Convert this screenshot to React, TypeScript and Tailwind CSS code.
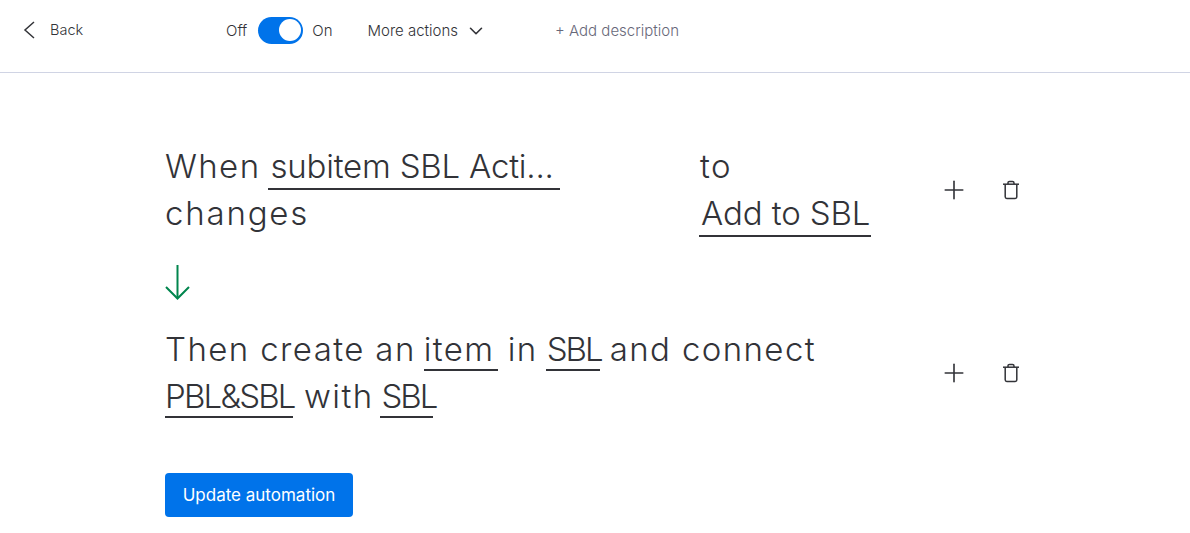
import { ChevronDown, Plus } from "lucide-react";

function Trash() {
  return (
    <svg width="18" height="20" viewBox="0 0 18 20" fill="none" stroke="#323338" strokeWidth="1.5" strokeLinejoin="round">
      <path d="M1 4.2h16" />
      <path d="M3.2 4.2v12.6c0 1 .6 1.7 1.6 1.7h8.4c1 0 1.6-.7 1.6-1.7V4.2" />
      <path d="M6 4V3c0-1 .6-1.6 1.500-1.600h3C11.400 1.400 12 2 12 3v1" />
    </svg>
  );
}

function RowActions() {
  return (
    <div className="flex items-center gap-[33px]">
      <Plus size={30} strokeWidth={1.3} color="#323338" />
      <Trash />
    </div>
  );
}

function Field({ children, className = "" }: { children: React.ReactNode; className?: string }) {
  return (
    <span className={`inline-block h-[45px] whitespace-nowrap border-b-2 border-[#323338] ${className}`}>
      {children}
    </span>
  );
}

export default function App() {
  return (
    <div className="h-[533px] w-[1190px] overflow-hidden bg-white font-['Inter',sans-serif] text-[#323338]">
      <header className="flex h-[73px] items-center border-b border-[#d0d4e4] pb-[12px] text-[15px] font-light">
        <div className="flex w-[226px] items-center pl-[23px]">
          <svg width="13" height="18" viewBox="0 0 13 18" fill="none" stroke="#323338" strokeWidth="1.500">
            <path d="M11 1 L2 9 L11 17" />
          </svg>
          <span className="ml-[14px] text-[14.500px]">Back</span>
        </div>
        <span className="mt-[2px]">Off</span>
        <span className="ml-[11px] flex h-[27px] w-[45px] items-center justify-end rounded-full bg-[#0073ea] pr-[2px]">
          <span className="h-[22px] w-[22px] rounded-full bg-white" />
        </span>
        <span className="ml-[9px] mt-[2px]">On</span>
        <span className="ml-[35px] mt-[2px]">More actions</span>
        <ChevronDown size={22} strokeWidth={1.75} className="ml-[7px] mt-[2px]" />
        <span className="ml-[68px] mt-[2px] text-[#676879]">+ Add description</span>
      </header>

      <main className="pl-[165px] text-[33px] font-light leading-[47px] tracking-[1.4px]">
        <div className="mt-[70px] flex w-[855px] items-center justify-between">
          <div className="grid grid-cols-[534px_auto]">
            <div className="flex">
              <span>When</span>
              <Field className="ml-[8px] h-[47px] w-[292px] pl-[2px] tracking-[-0.2px]">subitem SBL Acti...</Field>
            </div>
            <span className="pl-[1px]">to</span>
            <span className="tracking-[1.8px]">changes</span>
            <Field className="h-[47px] w-[172px] pl-[2px] tracking-[-0.1px]">Add to SBL</Field>
          </div>
          <RowActions />
        </div>

        <svg width="26" height="36" viewBox="0 0 26 36" fill="none" stroke="#00854d" strokeWidth="2" className="mt-[27px]">
          <path d="M12.500 1v33" />
          <path d="M1 23l11.500 11.500L24 23" />
        </svg>

        <div className="mt-[26px] flex w-[855px] items-center justify-between">
          <div className="flex flex-col">
            <div className="flex h-[47px]">
              <span>Then create an</span>
              <Field className="ml-[8px] w-[74px]">item</Field>
              <span className="ml-[10px]">in</span>
              <Field className="ml-[8px] w-[54px] pl-[1px] tracking-[-2px]">SBL</Field>
              <span className="ml-[10px]">and connect</span>
            </div>
            <div className="flex h-[47px]">
              <Field className="w-[128px] tracking-[-1.8px]">PBL&amp;SBL</Field>
              <span className="ml-[11px]">with</span>
              <Field className="ml-[7px] w-[53px] pl-[1px] tracking-[-2px]">SBL</Field>
            </div>
          </div>
          <RowActions />
        </div>

        <button className="mt-[53px] block h-[44px] w-[188px] rounded-[4px] bg-[#0073ea] text-[17px] font-normal leading-[44px] tracking-normal text-white">
          Update automation
        </button>
      </main>
    </div>
  );
}
